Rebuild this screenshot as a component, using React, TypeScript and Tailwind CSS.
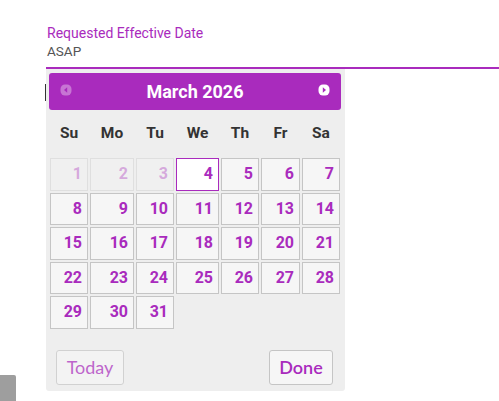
import React from "react";

const PURPLE = "#a92bbd";

const colWidths = "grid-cols-[38px_44px_38px_43px_38px_39px_38px]";
const dayNames = ["Su", "Mo", "Tu", "We", "Th", "Fr", "Sa"];

// March 2026 starts on a Sunday
const weeks: (number | null)[][] = [
  [1, 2, 3, 4, 5, 6, 7],
  [8, 9, 10, 11, 12, 13, 14],
  [15, 16, 17, 18, 19, 20, 21],
  [22, 23, 24, 25, 26, 27, 28],
  [29, 30, 31, null, null, null, null],
];

function NavIcon({ dir, dim }: { dir: "prev" | "next"; dim?: boolean }) {
  return (
    <svg
      width="12"
      height="12"
      viewBox="0 0 12 12"
      className={dim ? "opacity-35" : ""}
    >
      <rect x="0.5" y="0.5" width="11" height="11" rx="4.5" fill="#ffffff" />
      {dir === "prev" ? (
        <path d="M7.2 3.2 L7.2 8.8 L4 6 Z" fill={PURPLE} />
      ) : (
        <path d="M4.8 3.2 L4.8 8.8 L8 6 Z" fill={PURPLE} />
      )}
    </svg>
  );
}

export default function App() {
  const today = 4;

  return (
    <div
      className="relative w-[499px] h-[401px] bg-white overflow-hidden"
      style={{ fontFamily: "Roboto, 'Liberation Sans', sans-serif" }}
    >
      <div className="pt-[25px] pl-[46px]">
        <div className="text-[14px] leading-[16px] text-[#a92bbd] pl-[1px]">
          Requested Effective Date
        </div>
        <div className="mt-[2px] text-[13.5px] leading-[16px] text-[#555555] pl-[1px]">
          ASAP
        </div>
        <div className="mt-[8px] h-[2px] bg-[#a92bbd]" />

        {/* Datepicker */}
        <div className="w-[299px] h-[322px] bg-[#eeeeee] rounded-b-[3px] pt-[4px] pl-[3px] pr-[4px]">
          <div className="relative h-[37px] rounded-[3px] bg-[#a92bbd] flex items-center justify-center">
            <div className="absolute left-[11px] top-[10.5px]">
              <NavIcon dir="prev" dim />
            </div>
            <span className="text-white font-bold text-[18px] leading-none">
              March 2026
            </span>
            <div className="absolute right-[11px] top-[10.5px]">
              <NavIcon dir="next" />
            </div>
          </div>

          <div className={`grid ${colWidths} gap-x-[2px] ml-[1px] h-[48px] items-center`}>
            {dayNames.map((d) => (
              <div
                key={d}
                className="text-center font-bold text-[15.5px] leading-none text-[#333333]"
              >
                {d}
              </div>
            ))}
          </div>

          <div className={`grid ${colWidths} gap-x-[2px] gap-y-[2px] ml-[1px]`}>
            {weeks.flat().map((n, i) => {
              if (n === null) return <div key={i} className="h-[32.5px]" />;
              const isPast = n < today;
              const isToday = n === today;
              return (
                <div
                  key={i}
                  className={`h-[32.5px] flex items-center justify-end pr-[5px] border text-[16px] font-bold leading-none ${
                    isToday
                      ? "bg-white border-[#a92bbd]"
                      : "bg-[#f6f6f6] border-[#c5c5c5]"
                  } ${isPast ? "opacity-35" : ""}`}
                >
                  <span className="text-[#a92bbd]">{n}</span>
                </div>
              );
            })}
          </div>

          <div
            className="flex justify-between mt-[21.5px] pl-[7px] pr-[8px]"
            style={{ fontFamily: "Lato, 'Open Sans', sans-serif" }}
          >
            <button className="w-[68px] h-[34.5px] rounded-[3px] border border-[#c5c5c5] bg-[#f6f6f6] text-[18px] font-normal text-[#a92bbd] opacity-70">
              Today
            </button>
            <button className="w-[64px] h-[34.5px] rounded-[3px] border border-[#c5c5c5] bg-[#f6f6f6] text-[18px] font-semibold text-[#a92bbd]">
              Done
            </button>
          </div>
        </div>
      </div>

      {/* stray caret from the input behind the picker */}
      <div className="absolute left-[45px] top-[84px] w-[1px] h-[17px] bg-[#333333]" />
      {/* partially visible control at the lower left */}
      <div className="absolute left-0 top-[375px] w-[16px] h-[26px] bg-[#9e9e9e] rounded-tr-[2px]" />
    </div>
  );
}
